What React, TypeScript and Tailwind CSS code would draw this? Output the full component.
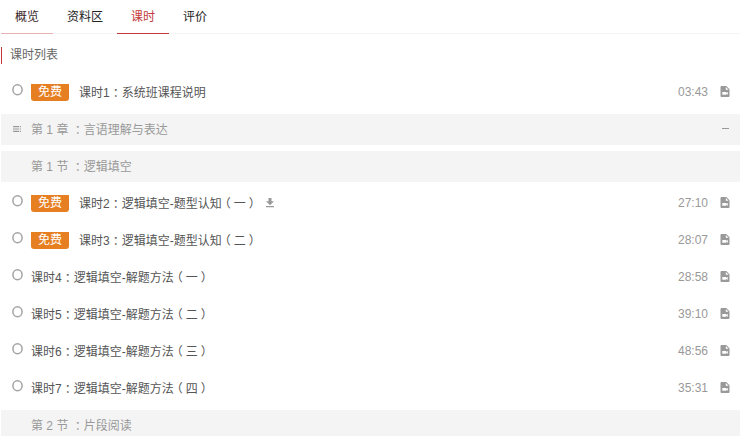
import React, { useState } from 'react';

type Row =
  | { kind: 'lesson'; no: number; title: string; part?: string; time: string; free?: boolean; download?: boolean }
  | { kind: 'chapter' | 'section'; no: number; title: string };

const tabs: string[] = ['概览', '资料区', '课时', '评价'];

const rows: Row[] = [
  { kind: 'lesson', no: 1, title: '系统班课程说明', time: '03:43', free: true },
  { kind: 'chapter', no: 1, title: '言语理解与表达' },
  { kind: 'section', no: 1, title: '逻辑填空' },
  { kind: 'lesson', no: 2, title: '逻辑填空-题型认知', part: '一', time: '27:10', free: true, download: true },
  { kind: 'lesson', no: 3, title: '逻辑填空-题型认知', part: '二', time: '28:07', free: true },
  { kind: 'lesson', no: 4, title: '逻辑填空-解题方法', part: '一', time: '28:58' },
  { kind: 'lesson', no: 5, title: '逻辑填空-解题方法', part: '二', time: '39:10' },
  { kind: 'lesson', no: 6, title: '逻辑填空-解题方法', part: '三', time: '48:56' },
  { kind: 'lesson', no: 7, title: '逻辑填空-解题方法', part: '四', time: '35:31' },
  { kind: 'section', no: 2, title: '片段阅读' },
];

// Half-width form with even padding, so the mark sits in the middle of its box
const Mark: React.FC<{ children: string }> = ({ children }) => (
  <span className="px-[3px] font-['Noto_Sans_CJK_SC',sans-serif] [font-feature-settings:'halt']">{children}</span>
);

const CircleIcon: React.FC = () => (
  <svg className="mb-1 h-3 w-[11px]" viewBox="0 0 11 12" fill="none" stroke="#a3a3a3" strokeWidth="1.5">
    <ellipse cx="5.5" cy="5.8" rx="4.6" ry="5" />
  </svg>
);

const ListIcon: React.FC = () => (
  <svg className="h-2 w-[10px]" viewBox="0 0 10 8" fill="#999">
    <path d="M1 1h6v1.2H1zM1 3.4h6v1.2H1zM1 5.8h6V7H1zM7.8 1H9v1.2H7.8zM7.8 3.4H9v1.2H7.8zM7.8 5.8H9V7H7.8z" />
  </svg>
);

const DownloadIcon: React.FC = () => (
  <svg className="h-[10px] w-2" viewBox="0 0 8 10" fill="#999">
    <path d="M2.5 0h3v3.2H8L4 7.2 0 3.2h2.5zM0 8h8v1.2H0z" />
  </svg>
);

const VideoFileIcon: React.FC = () => (
  <svg className="h-3 w-[10px]" viewBox="0 0 10 12" fill="#999">
    <path
      fillRule="evenodd"
      d="M1.5 0h4.8L9.5 3.2V10a1 1 0 0 1-1 1h-7a1 1 0 0 1-1-1V1a1 1 0 0 1 1-1zM5.8.9v2.8h2.8zM2.3 6v2.8H6V8l1.8.8V6L6 6.8V6z"
    />
  </svg>
);

const MinusIcon: React.FC = () => (
  <svg className="h-1 w-[7px]" viewBox="0 0 7 4" fill="#999">
    <path d="M0 1h7v1H0z" />
  </svg>
);

const LessonRow: React.FC<{ row: Extract<Row, { kind: 'lesson' }> }> = ({ row }) => (
  <li className="flex h-[31px] items-center pr-[10px] pb-px pl-[11px] text-[#555]">
    <span className="flex w-[19px] shrink-0">
      <CircleIcon />
    </span>
    {row.free && (
      <span className="mt-[7px] mr-[10px] h-[17px] w-[38px] self-start rounded-b-[3px] bg-[#e67e22] text-center leading-4 text-white">
        免费
      </span>
    )}
    <a href="#lesson" className="leading-4">
      课时{row.no}
      <Mark>：</Mark>
      {row.title}
      {row.part && (
        <>
          <Mark>（</Mark>
          {row.part}
          <Mark>）</Mark>
        </>
      )}
    </a>
    {row.download && (
      <button type="button" aria-label="下载" className="ml-2">
        <DownloadIcon />
      </button>
    )}
    <span className="mr-3 ml-auto leading-4 text-[#999]">{row.time}</span>
    <VideoFileIcon />
  </li>
);

const HeadingRow: React.FC<{ row: Extract<Row, { kind: 'chapter' | 'section' }> }> = ({ row }) => (
  <li className="flex h-[31px] items-center bg-[#f4f4f4] pr-[11px] pb-px pl-[11px] text-[#999]">
    <span className="flex w-[19px] shrink-0">{row.kind === 'chapter' && <ListIcon />}</span>
    <span className="leading-4">
      第 {row.no} {row.kind === 'chapter' ? '章' : '节'} <Mark>：</Mark>
      {row.title}
    </span>
    {row.kind === 'chapter' && (
      <button type="button" aria-label="收起" className="ml-auto">
        <MinusIcon />
      </button>
    )}
  </li>
);

const App: React.FC = () => {
  const [active, setActive] = useState<string>('课时');

  const tabColor = (tab: string): string => {
    if (tab === active) return 'border-[#c43a3c] text-[#c43a3c]';
    return tab === '概览' ? 'border-[#e6b1b2] text-[#3a1f1f]' : 'border-transparent text-[#222]';
  };

  return (
    <div className="bg-white pl-px font-['Liberation_Sans','Noto_Sans_CJK_SC',sans-serif] text-xs">
      <nav className="flex border-b border-[#f4f4f4]">
        {tabs.map((tab) => (
          <button
            key={tab}
            type="button"
            onClick={() => setActive(tab)}
            className={`-mb-px h-[34px] border-b px-[14px] ${tabColor(tab)}`}
          >
            {tab}
          </button>
        ))}
      </nav>
      <h2 className="my-[13px] border-l border-[#c43a3c] pl-2 leading-[17px] text-[#666]">课时列表</h2>
      <ul className="flex flex-col gap-1.5">
        {rows.map((row) =>
          row.kind === 'lesson' ? (
            <LessonRow key={`lesson-${row.no}`} row={row} />
          ) : (
            <HeadingRow key={`${row.kind}-${row.no}`} row={row} />
          ),
        )}
      </ul>
    </div>
  );
};

export default App;
